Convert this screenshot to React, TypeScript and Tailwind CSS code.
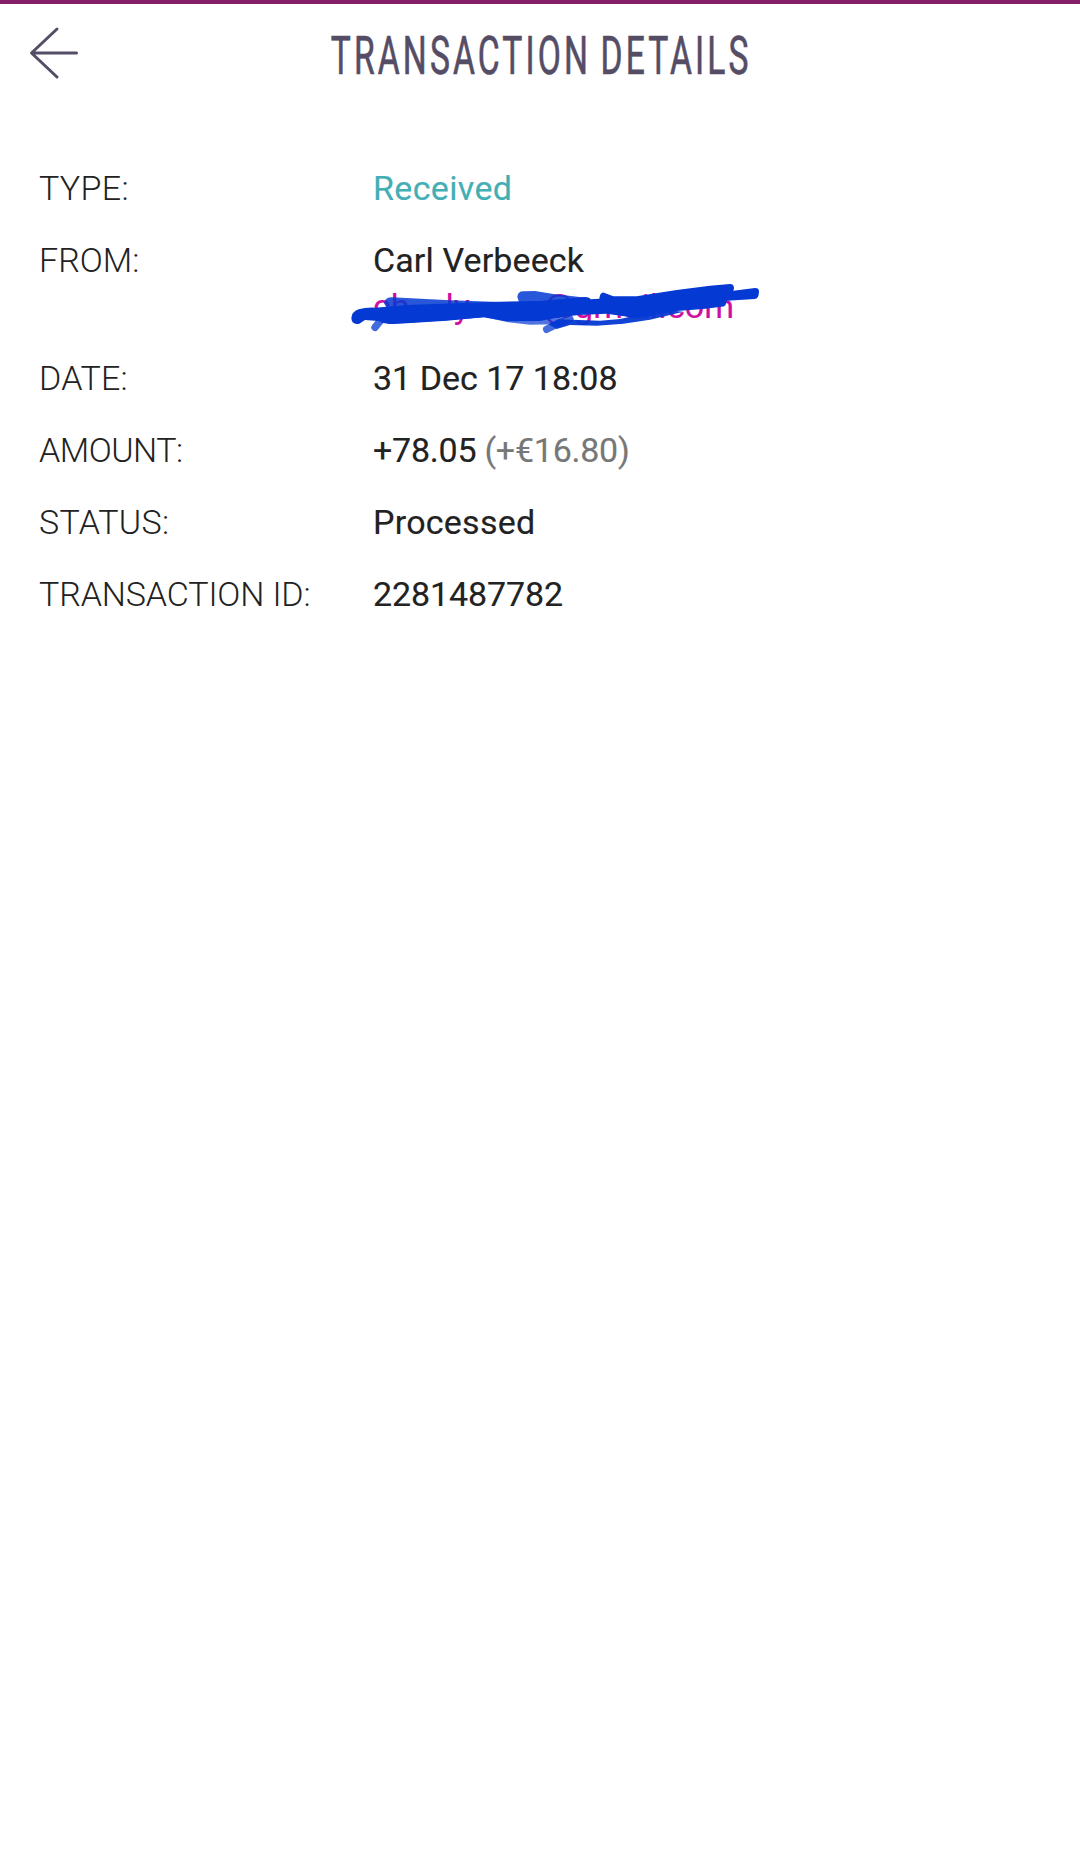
import type { ReactNode } from "react";

function Row({ label, tracking = "", children }: { label: string; tracking?: string; children: ReactNode }) {
  return (
    <div className="flex">
      <dt className={`w-[334px] shrink-0 font-light ${tracking}`}>{label}</dt>
      <dd className="relative whitespace-nowrap [-webkit-text-stroke:0.15px]">{children}</dd>
    </div>
  );
}

/* Pen strokes drawn over the sender's address, on a grid of a third of a pixel. */
function Scribble() {
  return (
    <svg
      className="absolute -left-[33px] top-[39px]"
      width="430"
      height="60"
      viewBox="0 0 1290 180"
      fill="#0439d3"
      aria-hidden="true"
    >
      <g fill="none" stroke="#0439d3" strokeLinecap="round" strokeLinejoin="round" strokeWidth="22">
        <path d="M105 157L122 136" opacity=".75" />
        <path d="M620 163L652 147L690 132" opacity=".75" />
      </g>
      <path d="M132 85Q136 66 155 67L330 76L500 82L560 110L150 115Z" opacity=".85" />
      <path d="M532 66Q533 48 552 49L585 48L640 57L700 64L750 70L748 100L540 90Z" opacity=".85" />
      <path d="M430 125L500 141L570 149L650 148L680 126L600 110Z" opacity=".7" />
      <path d="M34 130Q34 111 56 103Q75 97 105 98L200 90L370 84L480 80L600 78L660 73L735 66Q747 66 752 73L778 71Q780 51 792 53L820 64L890 64L1010 45L1110 32L1170 27Q1182 27 1182 40L1180 47L1245 39Q1258 39 1257 51Q1256 72 1244 72L1160 77Q1160 95 1144 95L1090 102L1010 108L965 116L895 130L800 116L715 120L650 128L600 138L500 139L430 127L320 136L195 144L150 147L115 138L75 135L58 146Q36 151 34 130Z" />
      <path d="M625 148L655 133L780 137L840 132L895 120L970 104L1030 110L930 134L850 146L770 152L690 150L650 162Z" opacity=".95" />
      <path d="M105 120L125 143L150 147L200 145L320 137L430 127L430 115Z" />
    </svg>
  );
}

export default function App() {
  return (
    <main className="min-h-[1861px] w-full overflow-hidden border-t-4 border-[#841e66] bg-white font-['Roboto',sans-serif] text-[#222]">
      <header className="grid h-[160px] grid-cols-[100px_1fr_100px] items-start text-[#554d66]">
        <button type="button" aria-label="Back" className="ml-[28px] mt-[22px] size-[54px]">
          <svg width="54" height="54" viewBox="0 0 54 54" fill="none" stroke="currentColor" strokeWidth="3" strokeLinecap="round" strokeLinejoin="round">
            <path d="M29 3L3.500 27L29 51M4 27H48.500" />
          </svg>
        </button>
        <h1 className="ml-[2px] mt-[20px] flex justify-center whitespace-nowrap text-[54px] leading-[64px] tracking-[5px] [-webkit-text-stroke:0.7px] [word-spacing:-3px]">
          <span className="inline-block origin-center scale-x-[0.622]">TRANSACTION DETAILS</span>
        </h1>
      </header>
      <dl className="flex flex-col gap-[24px] pl-[39px] text-[34px] leading-[48px]">
        <Row label="TYPE:" tracking="tracking-[0.3px]"><span className="tracking-[0.35px] text-[#43afb5]">Received</span></Row>
        <Row label="FROM:">
          <span className="tracking-[0.12px]">Carl Verbeeck</span>
          <div className="-mt-[2px] flex h-[48px] w-[361px] justify-between text-[#cf0fa2]">
            <span>ch<span className="ml-[36px]">ly</span></span>
            <span>@gmail.com</span>
          </div>
          <Scribble />
        </Row>
        <Row label="DATE:" tracking="tracking-[0.2px]"><span>31 Dec 17 18:08</span></Row>
        <Row label="AMOUNT:" tracking="tracking-[-0.5px]">
          <span className="tracking-[-0.24px]">+78.05 <span className="text-[#777]">(+€16.80)</span></span>
        </Row>
        <Row label="STATUS:" tracking="tracking-[0.3px]"><span className="tracking-[0.25px]">Processed</span></Row>
        <Row label="TRANSACTION ID:" tracking="tracking-[-0.13px]"><span className="tracking-[-0.1px]">2281487782</span></Row>
      </dl>
    </main>
  );
}
